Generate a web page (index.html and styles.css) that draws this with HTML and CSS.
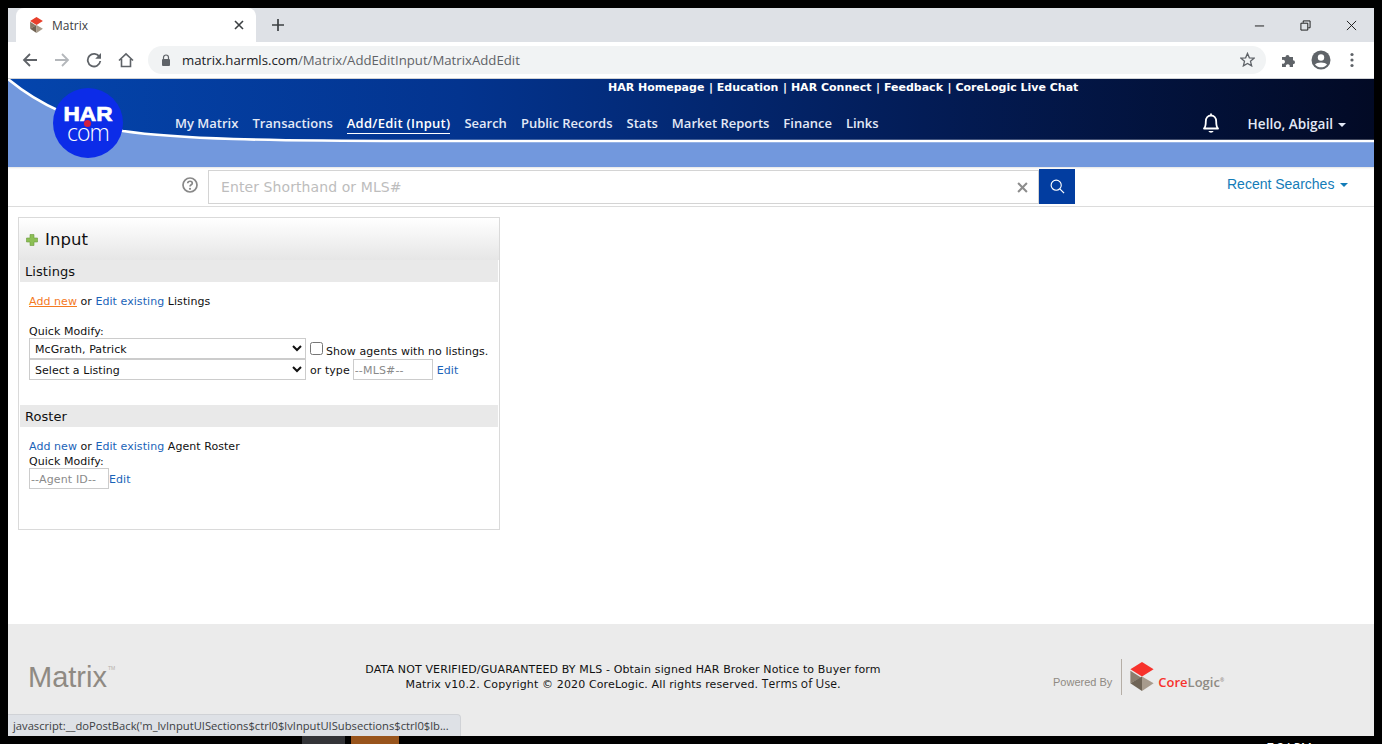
FILE: index.html
```html
<!DOCTYPE html>
<html lang="en">
    <head>
        <title>Matrix</title>
        <link rel="stylesheet" href="styles.css">
    </head>
    <body>
        <div class="window">
            <!--Browser tabs-->
            <div class="tabstrip">
                <div class="tab">
                    <svg class="favicon" viewBox="0 0 24 30"><polygon fill="#e8402c" points="12,0 24,7.5 12,15 0,7.5"/><polygon fill="#8a7a68" points="0,9 11,16 0,22"/><polygon fill="#6f6252" points="0,22 12,15 12,30"/><polygon fill="#a89a88" points="12,15 24,22 12,30"/></svg>
                    <span class="tab-title">Matrix</span>
                    <svg class="tab-close" viewBox="0 0 10 10"><path d="M1 1L9 9M9 1L1 9" stroke="#3c4043" stroke-width="1.6" fill="none"/></svg>
                </div>
                <svg class="new-tab" viewBox="0 0 12 12"><path d="M6 0V12M0 6H12" stroke="#3c4043" stroke-width="1.7" fill="none"/></svg>
                <div class="window-buttons">
                    <svg viewBox="0 0 12 12"><path d="M1 6.5H11" stroke="#111" fill="none"/></svg>
                    <svg viewBox="0 0 12 12"><path d="M3.5 3V1H11V8.5H9M1 3.5H8.5V11H1Z" stroke="#111" fill="none"/></svg>
                    <svg viewBox="0 0 12 12"><path d="M1 1L11 11M11 1L1 11" stroke="#111" fill="none"/></svg>
                </div>
            </div>

            <!--Browser toolbar-->
            <div class="toolbar">
                <svg class="tool" viewBox="0 0 16 16"><path d="M15 8H2M8 2L2 8L8 14" stroke="#5f6368" stroke-width="1.8" fill="none"/></svg>
                <svg class="tool" viewBox="0 0 16 16"><path d="M1 8H14M8 2L14 8L8 14" stroke="#b4b7bb" stroke-width="1.8" fill="none"/></svg>
                <svg class="tool" viewBox="0 0 16 16"><path d="M13.5 5A6.3 6.3 0 1 0 14.3 9" stroke="#5f6368" stroke-width="1.8" fill="none"/><polygon fill="#5f6368" points="15,1 15,6.8 9.2,6.8"/></svg>
                <svg class="tool" viewBox="0 0 16 16"><path d="M1 8.5L8 1.8L15 8.5M3.5 7V14.5H12.5V7" stroke="#5f6368" stroke-width="1.6" fill="none"/></svg>
                <div class="omnibox">
                    <svg class="lock" viewBox="0 0 10 12"><path d="M2.5 5V3.5a2.5 2.5 0 0 1 5 0V5" stroke="#5f6368" stroke-width="1.2" fill="none"/><rect x="1" y="5" width="8" height="7" rx="1" fill="#5f6368"/></svg>
                    <span class="url"><span class="url-host">matrix.harmls.com</span>/Matrix/AddEditInput/MatrixAddEdit</span>
                    <svg class="star" viewBox="0 0 16 16"><path d="M8 1.5L10 6.2L15 6.6L11.2 9.9L12.4 14.8L8 12.2L3.6 14.8L4.8 9.9L1 6.6L6 6.2Z" stroke="#5f6368" stroke-width="1.4" fill="none"/></svg>
                </div>
                <svg class="ext" viewBox="0 0 16 16"><path fill="#5f6368" d="M1 5H4.5A2 2 0 1 1 8.5 5H12V8.2A2 2 0 1 1 12 12.2V15H8.6A2 2 0 1 0 5 15H1V11.5A2 2 0 1 0 1 8Z"/></svg>
                <svg class="avatar" viewBox="0 0 20 20"><circle cx="10" cy="10" r="9.5" fill="#5f6368"/><circle cx="10" cy="7.5" r="3.2" fill="#fff"/><path d="M4 14.5C5.5 11.8 14.5 11.8 16 14.5C14.5 16.6 12 17.3 10 17.3C8 17.3 5.5 16.6 4 14.5Z" fill="#fff"/></svg>
                <svg class="menu" viewBox="0 0 4 16"><circle cx="2" cy="2.5" r="1.6" fill="#5f6368"/><circle cx="2" cy="8" r="1.6" fill="#5f6368"/><circle cx="2" cy="13.5" r="1.6" fill="#5f6368"/></svg>
            </div>

            <!--Site header-->
            <header class="site-header">
                <svg class="header-bg" viewBox="0 0 1366 88" preserveAspectRatio="none">
                    <defs>
                        <linearGradient id="headerBlue">
                            <stop offset="0" stop-color="#0445ad"/>
                            <stop offset="0.33" stop-color="#03348f"/>
                            <stop offset="0.67" stop-color="#031c56"/>
                            <stop offset="1" stop-color="#020a25"/>
                        </linearGradient>
                    </defs>
                    <rect width="1366" height="88" fill="url(#headerBlue)"/>
                    <path d="M0 0C30 25 70 43 115 52C170 60 260 62 400 62L1366 62V88H0Z" fill="#7298dd"/>
                    <path d="M0 0C30 25 70 43 115 52C170 60 260 62 400 62L1366 62" stroke="#fff" stroke-width="2.6" fill="none"/>
                </svg>
                <div class="logo">
                    <span class="logo-har">HAR</span>
                    <span class="logo-com">com</span>
                    <span class="logo-dot"></span>
                </div>
                <div class="top-links">
                    <a>HAR Homepage</a> | <a>Education</a> | <a>HAR Connect</a> | <a>Feedback</a> | <a>CoreLogic Live Chat</a>
                </div>
                <nav class="main-nav">
                    <a>My Matrix</a>
                    <a>Transactions</a>
                    <a class="active">Add/Edit (Input)</a>
                    <a>Search</a>
                    <a>Public Records</a>
                    <a>Stats</a>
                    <a>Market Reports</a>
                    <a>Finance</a>
                    <a>Links</a>
                    <svg class="bell" viewBox="0 0 20 22"><path d="M10 1.5V3M3 16.5C4.5 15 4.8 13 4.8 9.5C4.8 6 7 3.5 10 3.5C13 3.5 15.2 6 15.2 9.5C15.2 13 15.5 15 17 16.5Z" stroke="#fff" stroke-width="1.8" fill="none" stroke-linejoin="round"/><path d="M7.5 19H12.5C12 21.2 8 21.2 7.5 19Z" fill="#fff"/></svg>
                    <a class="user">Hello, Abigail<span class="caret"></span></a>
                </nav>
            </header>

            <!--Search bar-->
            <div class="search-bar">
                <svg class="help" viewBox="0 0 16 16"><circle cx="8" cy="8" r="7" stroke="#888" stroke-width="1.7" fill="none"/><path d="M5.7 6.2C5.9 3.6 10.3 3.6 10.3 6.2C10.3 7.8 8 7.8 8 9.6" stroke="#888" stroke-width="1.7" fill="none"/><circle cx="8" cy="11.8" r="1.1" fill="#888"/></svg>
                <div class="search-box">
                    <input class="search-input" type="text" placeholder="Enter Shorthand or MLS#">
                    <svg class="search-clear" viewBox="0 0 10 10"><path d="M1 1L9 9M9 1L1 9" stroke="#8d8d8d" stroke-width="1.9" fill="none"/></svg>
                </div>
                <div class="search-btn">
                    <svg viewBox="0 0 16 16"><circle cx="6.6" cy="6.6" r="5.4" stroke="#fff" stroke-width="1.2" fill="none"/><path d="M10.5 10.5L15 15" stroke="#fff" stroke-width="1.3"/></svg>
                </div>
                <a class="recent">Recent Searches<span class="caret"></span></a>
            </div>

            <!--Main content-->
            <main class="content">
                <section class="panel">
                    <h1 class="panel-title">
                        <svg class="plus" viewBox="0 0 12 12"><path d="M4 0.5H8V4H11.5V8H8V11.5H4V8H0.5V4H4Z" fill="#8cbf55" stroke="#6b9a3c" stroke-width="0.6"/></svg>
                        Input
                    </h1>
                    <h2 class="section-title">Listings</h2>
                    <div class="listing-body">
                        <div class="line"><a class="link-hover">Add new</a> or <a>Edit existing</a> Listings</div>
                        <div class="quick-label">Quick Modify:</div>
                        <div class="select-row">
                            <select class="agent-select"><option>McGrath, Patrick</option></select>
                            <input class="check" type="checkbox" id="no_listings">
                            <label class="check-label" for="no_listings">Show agents with no listings.</label>
                        </div>
                        <div class="select-row">
                            <select class="agent-select"><option>Select a Listing</option></select>
                            <span class="or-type">or type</span>
                            <input class="small-input" type="text" placeholder="--MLS#--">
                            <a class="edit-link">Edit</a>
                        </div>
                    </div>
                    <h2 class="section-title">Roster</h2>
                    <div class="roster-body">
                        <div class="line"><a>Add new</a> or <a>Edit existing</a> Agent Roster</div>
                        <div class="quick-line">Quick Modify:</div>
                        <div class="select-row">
                            <input class="small-input" type="text" placeholder="--Agent ID--">
                            <a class="roster-edit">Edit</a>
                        </div>
                    </div>
                </section>
            </main>

            <!--Footer-->
            <footer class="site-footer">
                <div class="matrix-logo">Matrix<span class="tm">TM</span></div>
                <div class="notice">
                    <div>DATA NOT VERIFIED/GUARANTEED BY MLS - Obtain signed HAR Broker Notice to Buyer form</div>
                    <div>Matrix v10.2. Copyright © 2020 CoreLogic. All rights reserved. <span class="terms">Terms of Use.</span></div>
                </div>
                <div class="powered">
                    <span class="powered-by">Powered By</span>
                    <span class="powered-line"></span>
                    <svg class="cl-mark" viewBox="0 0 24 30"><polygon fill="#f7322c" points="12,0 24,7.5 12,15 0,7.5"/><polygon fill="#8a7d6e" points="0,9 11,16 0,22"/><polygon fill="#6f6456" points="0,22 12,15 12,30"/><polygon fill="#a79b8d" points="12,15 24,22 12,30"/></svg>
                    <span class="cl-name"><span class="cl-core">Core</span>Logic<span class="cl-reg">®</span></span>
                </div>
            </footer>

            <div class="status-bubble">javascript:__doPostBack('m_lvInputUISections$ctrl0$lvInputUISubsections$ctrl0$lb...</div>
        </div>

        <!--Desktop taskbar peeking out under the window-->
        <div class="taskbar">
            <span class="task task-grey"></span>
            <span class="task task-orange"></span>
            <span class="clock">7:24 PM</span>
        </div>
    </body>
</html>
```

FILE: styles.css
```css
* {
    box-sizing: border-box;
}

html, body {
    height: 744px;
    overflow: hidden;
}

body {
    margin: 0;
    background-color: black;
    font-family: 'DejaVu Sans', sans-serif;
    font-size: 11px;
    color: #111;
}

.window {
    position: relative;
    margin: 8px 8px 0;
    width: 1366px;
    height: 728px;
    background-color: white;
    display: flex;
    flex-direction: column;
}

/* browser chrome */
.tabstrip {
    height: 34px;
    flex: none;
    background-color: #dee1e6;
    display: flex;
    align-items: center;
}

.tab {
    margin-left: 8px;
    width: 240px;
    height: 34px;
    background-color: white;
    border-radius: 8px 8px 0 0;
    display: flex;
    align-items: center;
    padding: 0 12px 0 13px;
}

.favicon {
    width: 15px;
    height: 16px;
}

.tab-title {
    margin-left: 8px;
    font-family: 'Open Sans', sans-serif;
    font-size: 12px;
    color: #3c4043;
    flex: 1;
}

.tab-close {
    width: 10px;
    height: 10px;
}

.new-tab {
    width: 12px;
    height: 12px;
    margin-left: 16px;
}

.window-buttons {
    margin-left: auto;
    display: flex;
    gap: 35px;
    padding-right: 17px;
}

.window-buttons svg {
    width: 11px;
    height: 11px;
}

.toolbar {
    height: 37px;
    flex: none;
    background-color: white;
    border-bottom: 1px solid #d0d2d5;
    display: flex;
    align-items: center;
    padding: 0 0 1px 14px;
}

.tool {
    width: 16px;
    height: 16px;
    margin-right: 16px;
}

.omnibox {
    width: 1118px;
    height: 28px;
    margin-left: -2px;
    background-color: #f1f3f4;
    border-radius: 14px;
    display: flex;
    align-items: center;
    padding: 0 11px 0 13px;
}

.lock {
    width: 10px;
    height: 12px;
}

.url {
    margin-left: 11px;
    flex: 1;
    font-family: 'Open Sans', sans-serif;
    font-size: 13.2px;
    color: #5f6368;
}

.url-host {
    color: #202124;
}

.star {
    width: 15px;
    height: 15px;
}

.ext {
    width: 16px;
    height: 16px;
    margin-left: 15px;
}

.avatar {
    width: 20px;
    height: 20px;
    margin-left: 14px;
}

.menu {
    width: 4px;
    height: 16px;
    margin-left: 19px;
}

/* site header */
.site-header {
    position: relative;
    height: 88px;
    flex: none;
    display: grid;
    grid-template-columns: 167px 1fr;
    grid-template-rows: 17px 1fr;
}

.header-bg {
    position: absolute;
    left: 0;
    top: 0;
    width: 100%;
    height: 100%;
}

.logo {
    position: relative;
    grid-row: 1 / 3;
    margin: 9px 0 0 45px;
    width: 70px;
    height: 70px;
    border-radius: 50%;
    background-color: #0c2ce8;
    color: white;
    text-align: center;
}

.logo-har {
    display: block;
    margin-top: 18px;
    font-family: 'Liberation Sans', sans-serif;
    font-weight: bold;
    font-size: 20px;
    line-height: 17px;
    transform: scaleX(1.13);
    -webkit-text-stroke: 0.7px white;
}

.logo-com {
    display: block;
    font-family: 'Open Sans', sans-serif;
    font-weight: 300;
    font-size: 23px;
    line-height: 18px;
    letter-spacing: -0.9px;
}

.logo-dot {
    position: absolute;
    left: 31px;
    top: 32px;
    width: 7px;
    height: 7px;
    border-radius: 50%;
    background-color: #d4213d;
}

.top-links {
    position: relative;
    padding: 2px 0 0 433px;
    font-weight: bold;
    font-size: 11px;
    line-height: 14px;
    color: white;
    white-space: nowrap;
}

.top-links a {
    margin-right: 0.8px;
}

.main-nav {
    position: relative;
    display: flex;
    align-items: flex-start;
    gap: 14px;
    padding-top: 18px;
    padding-right: 28px;
    font-family: 'Open Sans', sans-serif;
    font-weight: 600;
    font-size: 13px;
    line-height: 18px;
    color: #e3e9f6;
    white-space: nowrap;
}

.main-nav .active {
    color: white;
    letter-spacing: 0.27px;
    border-bottom: 1px solid white;
    padding-bottom: 1px;
}

.bell {
    width: 20px;
    height: 22px;
    margin-left: auto;
    margin-top: -2px;
}

.user {
    margin-left: 13px;
    padding-top: 1px;
    font-size: 13.6px;
}

.caret {
    display: inline-block;
    margin-left: 5px;
    vertical-align: middle;
    border-top: 4px solid currentColor;
    border-left: 4px solid transparent;
    border-right: 4px solid transparent;
}

/* search bar */
.search-bar {
    position: relative;
    height: 40px;
    flex: none;
    border-bottom: 1px solid #dcdcdc;
    display: flex;
    align-items: flex-start;
    padding-left: 174px;
    box-shadow: inset 0 2px 2px -1px #e4e4e4;
}

.help {
    width: 16px;
    height: 16px;
    margin-top: 10px;
}

.search-box {
    margin: 3px 0 0 10px;
    width: 831px;
    height: 34px;
    border: 1px solid #d4d4d4;
    display: flex;
    align-items: center;
    padding-right: 10px;
}

.search-input {
    flex: 1;
    border: none;
    outline: none;
    padding: 0 0 0 12px;
    font-family: 'DejaVu Sans', sans-serif;
    font-size: 14px;
    letter-spacing: 0.09px;
    background: none;
}

.search-input::placeholder {
    color: #bdbdbd;
}

.search-clear {
    width: 11px;
    height: 11px;
    margin-top: 1px;
}

.search-btn {
    width: 36px;
    height: 35px;
    margin-top: 2px;
    background-color: #023da0;
    display: flex;
    align-items: center;
    justify-content: center;
}

.search-btn svg {
    width: 15px;
    height: 15px;
}

.recent {
    margin: 9px 0 0 152px;
    font-family: 'Liberation Sans', sans-serif;
    font-size: 14px;
    line-height: 16px;
    color: #137cb8;
}

.recent .caret {
    margin-left: 6px;
}

/* input panel */
.content {
    flex: 1;
    padding: 10px 10px 0;
}

.panel {
    width: 482px;
    height: 313px;
    border: 1px solid #dadada;
    padding: 0 1px;
    letter-spacing: 0.06px;
}

.panel-title {
    margin: 0 -1px;
    height: 42px;
    padding-left: 7px;
    display: flex;
    align-items: center;
    gap: 7px;
    font-weight: normal;
    font-size: 16.5px;
    background: linear-gradient(to bottom, white, #e6e6e6);
}

.plus {
    width: 12px;
    height: 12px;
    margin-top: 2px;
}

.section-title {
    margin: 0;
    height: 22px;
    line-height: 24px;
    padding-left: 5px;
    font-weight: normal;
    font-size: 13px;
    background-color: #e9e9e9;
}

.listing-body {
    height: 123px;
    padding: 12px 9px 0;
}

.roster-body {
    padding: 12px 9px 0;
}

.line {
    line-height: 15px;
    white-space: nowrap;
}

.quick-line {
    height: 14px;
    line-height: 16px;
}

a {
    color: #1a63b8;
}

.top-links a, .main-nav a {
    color: inherit;
}

.main-nav .active {
    color: white;
}

.link-hover {
    color: #f47a1f;
    text-decoration: underline;
}

.quick-label {
    margin-top: 15px;
    height: 14px;
    line-height: 16px;
}

.select-row {
    display: flex;
    align-items: center;
    white-space: nowrap;
}

.agent-select {
    width: 277px;
    height: 21px;
    border: 1px solid #ccc;
    border-radius: 0;
    background-color: white;
    font-family: 'DejaVu Sans', sans-serif;
    font-size: 11px;
    letter-spacing: 0.06px;
    padding: 2px 0 0 1px;
    color: #111;
}

.check {
    width: 13px;
    height: 13px;
    margin: 0 3px 0 4px;
}

.check-label {
    margin-top: 5px;
}

.or-type {
    margin: 2px 3px 0 4px;
}

.small-input {
    width: 80px;
    height: 21px;
    border: 1px solid #ccc;
    padding: 2px 1px 0;
    font-family: 'DejaVu Sans', sans-serif;
    font-size: 11px;
    letter-spacing: 0.15px;
}

.small-input::placeholder {
    color: #8a8a8a;
}

.edit-link {
    margin: 2px 0 0 4px;
}

.roster-edit {
    margin-top: 2px;
}

/* footer */
.site-footer {
    height: 112px;
    flex: none;
    background-color: #ebebeb;
    display: grid;
    grid-template-columns: 330px 570px 1fr;
    align-items: start;
}

.matrix-logo {
    margin: 27px 0 0 20px;
    font-family: 'Liberation Sans', sans-serif;
    font-size: 29px;
    line-height: 34px;
    color: #8f8a83;
}

.tm {
    font-size: 5px;
    vertical-align: 17px;
    margin-left: 1px;
    color: #b5b0aa;
}

.notice {
    margin-top: 38px;
    text-align: center;
    line-height: 15px;
    letter-spacing: 0.13px;
    white-space: nowrap;
}

.terms {
    font-family: 'Open Sans', sans-serif;
    font-size: 12px;
    line-height: 1;
}

.powered {
    margin: 35px 0 0 145px;
    display: flex;
    align-items: center;
    height: 36px;
}

.powered-by {
    margin-top: 10px;
    font-family: 'Liberation Sans', sans-serif;
    font-size: 11px;
    color: #8f8a83;
}

.powered-line {
    width: 1px;
    height: 36px;
    margin-left: 9px;
    background-color: #b5aea6;
}

.cl-mark {
    width: 24px;
    height: 29px;
    margin: -1px 0 0 8px;
}

.cl-name {
    margin: 10px 0 0 4px;
    font-family: 'Open Sans', sans-serif;
    font-weight: 600;
    font-size: 13px;
    color: #8f8a83;
}

.cl-core {
    color: #f7322c;
}

.cl-reg {
    font-size: 5px;
    vertical-align: 5px;
}

.status-bubble {
    position: absolute;
    left: 0;
    bottom: 0;
    width: 453px;
    height: 22px;
    padding: 2px 0 0 5px;
    background-color: #dee1e6;
    border: 1px solid #d0d2d6;
    border-width: 1px 1px 0 0;
    border-radius: 0 4px 0 0;
    font-family: 'Open Sans', sans-serif;
    font-size: 11.2px;
    line-height: 18px;
    color: #3c4043;
    white-space: nowrap;
    overflow: hidden;
}

/* taskbar */
.taskbar {
    height: 8px;
    display: flex;
    overflow: hidden;
    padding-left: 302px;
}

.task {
    height: 8px;
}

.task-grey {
    width: 43px;
    background-color: #333438;
}

.task-orange {
    width: 48px;
    margin-left: 6px;
    background-color: #98541c;
}

.clock {
    margin-left: 868px;
    padding-top: 4px;
    font-family: 'Open Sans', sans-serif;
    font-size: 12px;
    line-height: 16px;
    color: white;
}
```
